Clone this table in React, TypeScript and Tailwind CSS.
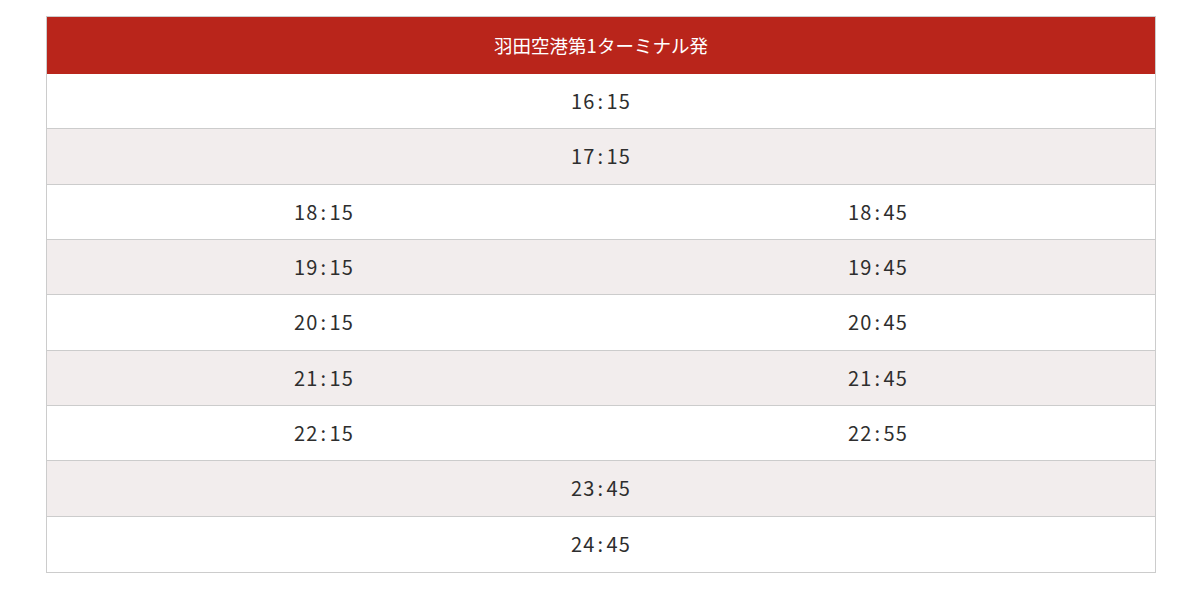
const rows: (string | [string, string])[] = [
  "16:15",
  "17:15",
  ["18:15", "18:45"],
  ["19:15", "19:45"],
  ["20:15", "20:45"],
  ["21:15", "21:45"],
  ["22:15", "22:55"],
  "23:45",
  "24:45",
];

function Time({ value }: { value: string }) {
  const [h, m] = value.split(":");
  return (
    <span>
      {h}
      <span className="px-[2px]">:</span>
      {m}
    </span>
  );
}

export default function App() {
  return (
    <div className="min-h-[592px] bg-white pt-4 font-['Noto_Sans_CJK_JP','Noto_Sans',sans-serif]">
      <div className="ml-[46px] w-[1110px] border border-[#cccccc]">
        <div className="flex h-[57px] items-center justify-center bg-[#b9251b] text-[18.5px] text-white">
          羽田空港第1ターミナル発
        </div>
        {rows.map((row, i) => (
          <div
            key={i}
            className={`grid h-[55.33px] grid-cols-2 items-center text-[20px] tracking-[0.06em] text-[#2e2e2e] ${
              i % 2 === 1 ? "bg-[#f2eded]" : "bg-white"
            } ${i < rows.length - 1 ? "border-b border-[#cccccc]" : ""}`}
          >
            {typeof row === "string" ? (
              <div className="col-span-2 text-center">
                <Time value={row} />
              </div>
            ) : (
              <>
                <div className="text-center">
                  <Time value={row[0]} />
                </div>
                <div className="text-center">
                  <Time value={row[1]} />
                </div>
              </>
            )}
          </div>
        ))}
      </div>
    </div>
  );
}
